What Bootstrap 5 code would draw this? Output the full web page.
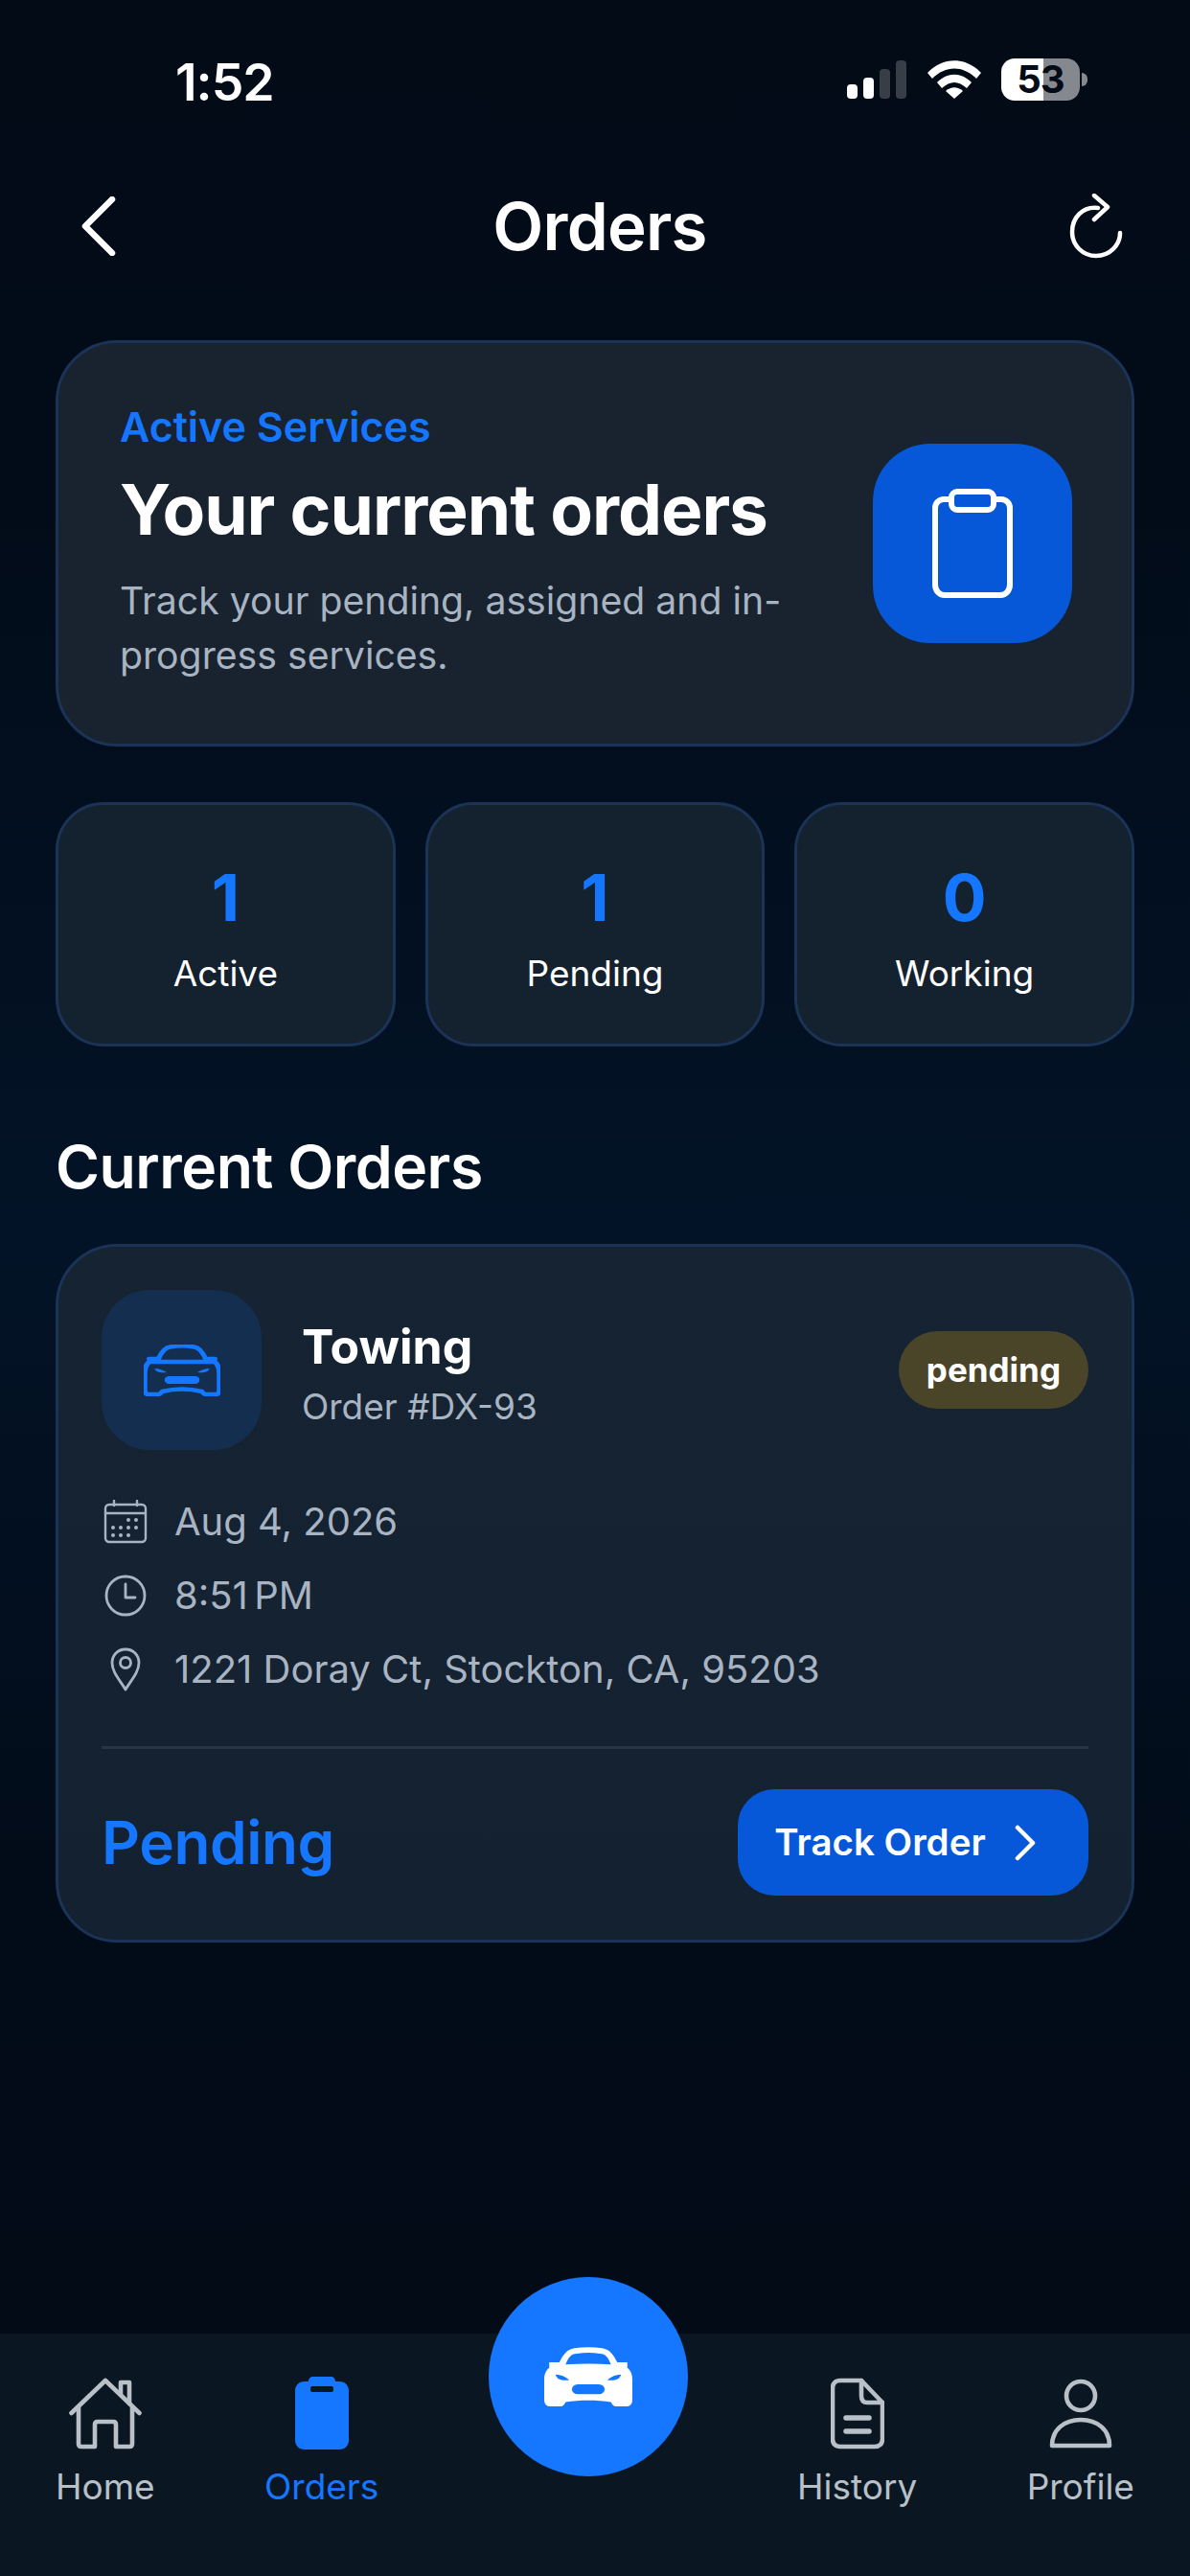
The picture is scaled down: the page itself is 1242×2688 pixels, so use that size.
<!DOCTYPE html>
<html lang="en">
<head>
    <meta charset="UTF-8">
    <meta name="viewport" content="width=device-width, initial-scale=1.0">
    <title>Orders</title>
    <link href="https://cdn.jsdelivr.net/npm/bootstrap@5.3.0/dist/css/bootstrap.min.css" rel="stylesheet">
    <style>
        body { margin: 0; background: #020b16; font-family: Inter, "Liberation Sans", sans-serif; color: #fff; }
        .app-screen { width: 1242px; height: 2688px; background: linear-gradient(180deg, #020b16 0%, #020c19 20%, #031327 48%, #020c19 72%, #020a14 100%); }
        .status-row { height: 199px; padding: 61px 107px 0 183px; }
        .status-time { font-size: 53.5px; font-weight: 600; line-height: 50px; letter-spacing: -1px; }
        .signal-bars { gap: 6px; height: 40px; margin-right: 22px; }
        .signal-bars span { width: 11px; border-radius: 4px; background: #373e47; }
        .signal-bars .on { background: #fff; }
        .batt-body { width: 82px; height: 44px; border-radius: 14px; background: linear-gradient(90deg, #fff 0, #fff 44px, #85888e 44px, #85888e 100%); color: #020b16; font-size: 40px; font-weight: 700; line-height: 44px; letter-spacing: -1px; text-align: center; margin-left: 21px; }
        .batt-nub { width: 6px; height: 14px; margin-left: 2px; border-radius: 0 6px 6px 0; background: #85888e; }
        .top-bar { height: 74px; padding: 0 70px 0 84px; }
        .page-title { font-size: 69px; font-weight: 600; line-height: 74px; letter-spacing: -.8px; margin: 0 0 0 14px; }
        .page-body { padding: 82px 58px 0; }
        .hero-card { height: 424px; border: 3px solid #1b3356; border-radius: 64px; background: #18232f; padding: 0 62px 0 64px; color: #fff; }
        .hero-kicker { color: #1577ff; font-size: 43px; font-weight: 600; line-height: 52px; margin-top: -3px; }
        .hero-title { font-size: 73px; font-weight: 700; line-height: 84px; letter-spacing: -1px; margin: 19px 0 24px; }
        .hero-text { color: #a9b4c2; font-size: 39.2px; line-height: 57px; width: 720px; margin: 0; }
        .hero-tile { width: 208px; height: 208px; border-radius: 60px; background: #0758d8; flex: none; }
        .stats-row { --bs-gutter-x: 31px; margin-top: 58px; }
        .stat-box { height: 255px; border: 3px solid #1b3356; border-radius: 50px; background: #14212f; color: #fff; padding-top: 8px; }
        .stat-num { color: #1577ff; font-size: 68px; font-weight: 700; line-height: 80px; }
        .stat-lbl { font-size: 37px; line-height: 50px; margin-top: 15px; }
        .section-title { font-size: 62.5px; font-weight: 600; line-height: 72px; letter-spacing: -.5px; margin: 89px 0 45px; }
        .order-card { height: 729px; border: 3px solid #1b3356; border-radius: 64px; background: linear-gradient(180deg, #152333 0%, #142130 100%); padding: 45px 45px 0; color: #fff; }
        .car-tile { width: 167px; height: 167px; border-radius: 50px; background: #142e4f; flex: none; margin-right: 42px; }
        .order-text { padding-top: 8px; }
        .order-name { font-size: 50px; font-weight: 700; line-height: 62px; margin: 0; }
        .order-num { color: #a9b4c2; font-size: 37px; line-height: 50px; margin-top: 7px; }
        .status-pill { background: #4a4529; color: #fff; font-size: 35px; font-weight: 700; line-height: 81px; padding: 0 29px; border-radius: 41px; }
        .detail-list { margin-top: 36px; }
        .detail-item { height: 77px; color: #a9b4c2; font-size: 40px; }
        .detail-icon { width: 50px; margin-right: 26px; flex: none; }
        .time-text { word-spacing: -.12em; }
        .order-line { height: 3px; background: #293544; margin: 0; border: 0; opacity: 1; margin-top: 42px; }
        .order-foot { margin-top: 42px; }
        .order-state { color: #1577ff; font-size: 62px; font-weight: 600; letter-spacing: -.4px; }
        .track-btn { width: 366px; height: 111px; border-radius: 38px; background: #0758d8; border: 0; color: #fff; font-size: 38.5px; font-weight: 600; gap: 29px; padding: 0 16px 0 0; }
        .tab-bar { height: 253px; margin-top: auto; background: #0a1723; padding: 0 58px; }
        .tab-item { color: #b9c0c8; font-size: 37px; line-height: 46px; }
        .tab-item svg { display: block; height: 76px; margin-bottom: 16px; }
        .tab-item.active { color: #1577ff; }
        .tab-icons { height: 100%; padding-top: 45px; }
        .fab-slot { width: 208px; }
        .fab-round { width: 208px; height: 208px; border-radius: 50%; background: #1577ff; margin-top: -59px; }
    </style>
</head>
<body>
    <div class="app-screen d-flex flex-column">
        <div class="status-row d-flex justify-content-between align-items-start">
            <div class="status-time">1:52</div>
            <div class="d-flex align-items-center">
                <div class="signal-bars d-flex align-items-end">
                    <span class="on" style="height:15px"></span>
                    <span class="on" style="height:22px"></span>
                    <span style="height:31px"></span>
                    <span style="height:40px"></span>
                </div>
                <svg width="56" height="40" viewBox="0 0 56 40" fill="#fff">
                    <path d="M0 13 C16 -4 40 -4 56 13 L51 19 C37 5 19 5 5 19Z"/>
                    <path d="M10 23 C21 12 35 12 46 23 L41 29 C32 21 24 21 15 29Z"/>
                    <path d="M19 32 C25 27 31 27 37 32 L28 40Z"/>
                </svg>
                <div class="batt-body">53</div>
                <div class="batt-nub"></div>
            </div>
        </div>

        <div class="top-bar d-flex justify-content-between align-items-center">
            <svg width="38" height="62" viewBox="0 0 38 62" fill="none" stroke="#fff" stroke-width="6.5" stroke-linecap="round" stroke-linejoin="round"><path d="M33 3 L5 31 L33 59"/></svg>
            <h1 class="page-title">Orders</h1>
            <svg width="56" height="68" viewBox="0 0 56 68" fill="none" stroke="#fff" stroke-width="4.5" stroke-linecap="round" stroke-linejoin="round"><path d="M30 15 C14 13 3 25 3 40 C3 54 14 65 28 65 C42 65 53 54 53 41"/><path d="M26 2 L40 14 L26 27"/></svg>
        </div>

        <div class="page-body">
            <div class="card hero-card flex-row align-items-center justify-content-between">
                <div>
                    <div class="hero-kicker">Active Services</div>
                    <h2 class="hero-title">Your current orders</h2>
                    <p class="hero-text">Track your pending, assigned and in-progress services.</p>
                </div>
                <div class="hero-tile d-flex align-items-center justify-content-center">
                    <svg width="84" height="114" viewBox="0 0 84 114" fill="none" stroke="#fff" stroke-width="6" stroke-linejoin="round"><path d="M20 11 H12 C7 11 3 15 3 20 V100 C3 106 7 111 13 111 H71 C77 111 81 106 81 100 V20 C81 15 77 11 72 11 H64"/><rect x="20" y="3" width="44" height="19" rx="6"/></svg>
                </div>
            </div>

            <div class="row stats-row">
                <div class="col-4">
                    <div class="stat-box d-flex flex-column align-items-center justify-content-center">
                        <div class="stat-num">1</div>
                        <div class="stat-lbl">Active</div>
                    </div>
                </div>
                <div class="col-4">
                    <div class="stat-box d-flex flex-column align-items-center justify-content-center">
                        <div class="stat-num">1</div>
                        <div class="stat-lbl">Pending</div>
                    </div>
                </div>
                <div class="col-4">
                    <div class="stat-box d-flex flex-column align-items-center justify-content-center">
                        <div class="stat-num">0</div>
                        <div class="stat-lbl">Working</div>
                    </div>
                </div>
            </div>

            <h2 class="section-title">Current Orders</h2>

            <div class="card order-card">
                <div class="d-flex align-items-center">
                    <div class="car-tile d-flex align-items-center justify-content-center">
                        <svg width="80" height="54" viewBox="0 0 70 54" preserveAspectRatio="none" fill="none" stroke="#1577ff" stroke-width="4.6" stroke-linecap="round" stroke-linejoin="round">
                            <path d="M5 18 H65 C68 21 69 25 69 30 V46 C69 50 68 52 66 52 H57 C55 52 54 50 53 49 C42 46 28 46 17 49 C16 50 15 52 13 52 H4 C2 52 1 50 1 46 V30 C1 25 2 21 5 18Z"/>
                            <path d="M13 16 C16 8 19 3 24 2.5 C31 1 39 1 46 2.5 C51 3 54 8 57 16"/>
                            <path d="M5 15 H13 M57 15 H65"/>
                            <path d="M10 25 C14 25 18 27 21 29 C16 30 11 29 10 25Z M60 25 C56 25 52 27 49 29 C54 30 59 29 60 25Z" fill="#1577ff" stroke="none"/>
                            <rect x="19" y="33" width="32" height="8" rx="4" fill="#1577ff" stroke="none"/>
                        </svg>
                    </div>
                    <div class="order-text">
                        <h3 class="order-name">Towing</h3>
                        <div class="order-num">Order #DX-93</div>
                    </div>
                    <span class="status-pill ms-auto">pending</span>
                </div>

                <div class="detail-list">
                    <div class="detail-item d-flex align-items-center">
                        <span class="detail-icon d-flex justify-content-center">
                            <svg width="46" height="46" viewBox="0 0 46 46" fill="none" stroke="#a9b4c2" stroke-width="2.4" stroke-linecap="round"><rect x="2" y="5" width="42" height="39" rx="4"/><path d="M2 14 H44 M11 1 V6 M35 1 V6"/><g fill="#a9b4c2" stroke="none"><circle cx="26" cy="21" r="2"/><circle cx="34" cy="21" r="2"/><circle cx="10" cy="29" r="2"/><circle cx="18" cy="29" r="2"/><circle cx="26" cy="29" r="2"/><circle cx="34" cy="29" r="2"/><circle cx="10" cy="37" r="2"/><circle cx="18" cy="37" r="2"/><circle cx="26" cy="37" r="2"/></g></svg>
                        </span>
                        Aug 4, 2026
                    </div>
                    <div class="detail-item d-flex align-items-center">
                        <span class="detail-icon d-flex justify-content-center">
                            <svg width="44" height="44" viewBox="0 0 44 44" fill="none" stroke="#a9b4c2" stroke-width="2.8" stroke-linecap="round" stroke-linejoin="round"><circle cx="22" cy="22" r="20"/><path d="M22 10 V24 H32"/></svg>
                        </span>
                        <span class="time-text">8:51 PM</span>
                    </div>
                    <div class="detail-item d-flex align-items-center">
                        <span class="detail-icon d-flex justify-content-center">
                            <svg width="32" height="46" viewBox="0 0 32 46" fill="none" stroke="#a9b4c2" stroke-width="2.8" stroke-linejoin="round"><path d="M16 44 C10 34 2 26 2 16 C2 8 8 2 16 2 C24 2 30 8 30 16 C30 26 22 34 16 44Z"/><circle cx="16" cy="16" r="5.5"/></svg>
                        </span>
                        1221 Doray Ct, Stockton, CA, 95203
                    </div>
                </div>

                <hr class="order-line">

                <div class="order-foot d-flex justify-content-between align-items-center">
                    <div class="order-state">Pending</div>
                    <button class="btn track-btn d-flex align-items-center justify-content-center">
                        Track Order
                        <svg width="24" height="38" viewBox="0 0 24 38" fill="none" stroke="#fff" stroke-width="4.5" stroke-linecap="round" stroke-linejoin="round"><path d="M4 3 L20 19 L4 35"/></svg>
                    </button>
                </div>
            </div>
        </div>

        <div class="tab-bar d-flex justify-content-between align-items-start">
            <div class="tab-item tab-icons d-flex flex-column align-items-center">
                <svg width="76" height="76" viewBox="0 0 76 76" fill="none" stroke="#b9c0c8" stroke-width="4.6" stroke-linecap="round" stroke-linejoin="round"><path d="M2.5 38 L38 4 L73.5 38"/><path d="M54 18 V6 H63 V28"/><path d="M10 32 V70 C10 72 11 73 13 73 H27 V50 C27 48 28 47 30 47 H46 C48 47 49 48 49 50 V73 H63 C65 73 66 72 66 70 V32"/></svg>
                Home
            </div>
            <div class="tab-item tab-icons active d-flex flex-column align-items-center">
                <svg width="56" height="76" viewBox="0 0 56 76" fill="#1577ff"><path d="M14 5 C14 2 16 0 19 0 H37 C40 0 42 2 42 5 H46 C52 5 56 9 56 15 V66 C56 72 52 76 46 76 H10 C4 76 0 72 0 66 V15 C0 9 4 5 10 5Z"/><rect x="16" y="10" width="24" height="6" rx="2" fill="#0a1723"/></svg>
                Orders
            </div>
            <div class="fab-slot">
                <div class="fab-round d-flex align-items-center justify-content-center">
                    <svg width="92" height="62" viewBox="0 0 70 54" preserveAspectRatio="none">
                        <path fill="#fff" d="M12 14 C15 7 18 2 24 1 C31 0 39 0 46 1 C52 2 55 7 58 14 H66 V19 C69 22 70 25 70 30 V48 C70 52 68 54 66 54 H57 C55 54 54 52 53 50 C42 48 28 48 17 50 C16 52 15 54 13 54 H4 C2 54 0 52 0 48 V30 C0 25 1 22 4 19 V14Z"/>
                        <path fill="#1577ff" d="M17 16 C19 10 21 6 26 6 C32 5 38 5 44 6 C49 6 51 10 53 16 C41 15 29 15 17 16Z M9 25 C13 25 17 27 20 30 C15 31 10 30 9 25Z M61 25 C57 25 53 27 50 30 C55 31 60 30 61 25Z"/>
                        <rect x="22" y="34" width="26" height="9" rx="4.5" fill="#1577ff"/>
                    </svg>
                </div>
            </div>
            <div class="tab-item tab-icons d-flex flex-column align-items-center">
                <svg width="56" height="76" viewBox="0 0 56 76" fill="none" stroke="#b9c0c8" stroke-width="4.6" stroke-linecap="round" stroke-linejoin="round"><path d="M32 4 H10 C5 4 2 7 2 12 V65 C2 70 5 73 10 73 H46 C51 73 54 70 54 65 V27Z"/><path d="M32 4 V20 C32 25 34 27 38 27 H54"/><path d="M16 43 H40 M16 57 H40" stroke-width="5.5"/></svg>
                History
            </div>
            <div class="tab-item tab-icons d-flex flex-column align-items-center">
                <svg width="66" height="76" viewBox="0 0 66 76" fill="none" stroke="#b9c0c8" stroke-width="4.6" stroke-linecap="round" stroke-linejoin="round"><circle cx="33" cy="20" r="15"/><path d="M3 72 C3 55 16 45 33 45 C50 45 63 55 63 72Z"/></svg>
                Profile
            </div>
        </div>
    </div>

    <script src="https://cdn.jsdelivr.net/npm/bootstrap@5.3.0/dist/js/bootstrap.bundle.min.js"></script>
</body>
</html>
